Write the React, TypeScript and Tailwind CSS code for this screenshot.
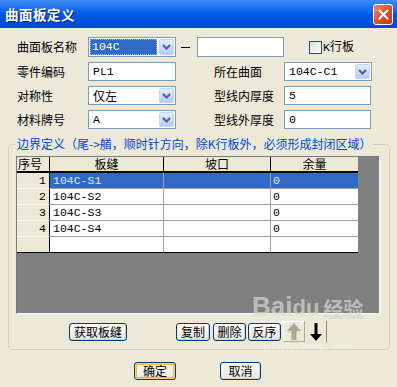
import React from 'react';

const cjk = "font-['Noto_Sans_CJK_SC','Noto_Sans',sans-serif]";
const mono = "font-['Liberation_Mono','DejaVu_Sans_Mono',monospace]";

function Chevron() {
  return (
    <svg width="9" height="6" viewBox="0 0 9 6">
      <path d="M1 1l3.5 3.5L8 1" fill="none" stroke="#4d6185" strokeWidth="2" />
    </svg>
  );
}

function Combo({ value, w, selected, latin }: { value: string; w: string; selected?: boolean; latin?: boolean }) {
  return (
    <div className={`flex h-full items-stretch border border-[#7f9db9] bg-white ${w}`}>
      <div className="flex flex-1 items-center p-[1px]">
        {selected ? (
          <span className="flex h-full w-full items-center border border-dotted border-[#8fb0f0] bg-[#316ac5] px-[1px] text-[11.5px] text-white">
            <span className={mono}>{value}</span>
          </span>
        ) : (
          <span className={`px-[3px] ${latin ? `${mono} text-[11.5px]` : `${cjk} text-[12px]`}`}>{value}</span>
        )}
      </div>
      <div className="m-[1px] flex w-[15px] items-center justify-center rounded-[2px] border border-[#c3d3fd] bg-gradient-to-b from-[#e4ecfd] to-[#b6cbf8]">
        <Chevron />
      </div>
    </div>
  );
}

function Field({ value, w }: { value: string; w: string }) {
  return (
    <div className={`flex h-full items-center border border-[#7f9db9] bg-white px-[4px] text-[11.5px] ${mono} ${w}`}>
      {value}
    </div>
  );
}

function Btn({ label, w, primary }: { label: string; w: string; primary?: boolean }) {
  return (
    <button
      className={`flex h-[18px] items-center justify-center rounded-[3px] border border-[#003c74] bg-gradient-to-b from-white to-[#e6e5dd] text-[12px] leading-none text-black ${cjk} ${w} ${
        primary ? 'shadow-[inset_0_0_0_1px_#fbd77a,inset_0_0_0_2px_#f4b23a]' : 'shadow-[inset_-1px_-1px_0_#d6d0c5]'
      }`}
    >
      {label}
    </button>
  );
}

const rows = [
  { n: 1, seam: '104C-S1', bevel: '', margin: '0' },
  { n: 2, seam: '104C-S2', bevel: '', margin: '0' },
  { n: 3, seam: '104C-S3', bevel: '', margin: '0' },
  { n: 4, seam: '104C-S4', bevel: '', margin: '0' },
];

function Grid() {
  return (
    <div className="flex h-[158px] w-[364px] flex-col border border-[#7a7a7a] border-b-white border-r-white bg-[#808080]">
      {/* header */}
      <div className={`flex h-[16px] text-[12px] leading-[14px] ${cjk}`}>
        <div className="w-[33px] border-r border-b-2 border-black bg-[#ece9d8] pl-[1px]">序号</div>
        <div className="w-[114px] border-r border-b-2 border-black bg-[#ece9d8] text-center">板缝</div>
        <div className="w-[107px] border-r border-b-2 border-black bg-[#ece9d8] text-center">坡口</div>
        <div className="w-[87px] border-b-2 border-black bg-[#ece9d8] text-center">余量</div>
      </div>
      {rows.map((r, i) => {
        const sel = i === 0;
        const cell = sel ? 'bg-[#316ac5] text-[#d6ecff]' : 'bg-white text-black';
        return (
          <div key={r.n} className={`flex h-[16px] text-[11.5px] leading-[15px] ${mono}`}>
            <div className="w-[33px] border-r border-b border-r-black border-b-[#f8f8f4] bg-[#ece9d8] pr-[3px] text-right">{r.n}</div>
            <div className={`w-[114px] border-r border-b border-[#a0a0a0] pl-[3px] ${cell}`}>{r.seam}</div>
            <div className={`w-[107px] border-r border-b border-[#a0a0a0] ${cell}`}>{r.bevel}</div>
            <div className={`w-[87px] border-b border-[#a0a0a0] pl-[2px] ${cell}`}>{r.margin}</div>
          </div>
        );
      })}
      <div className="flex h-[16px]">
        <div className="w-[33px] border-r border-b border-black bg-[#ece9d8]" />
        <div className="w-[114px] border-r border-b border-[#a0a0a0] border-b-black bg-white" />
        <div className="w-[107px] border-r border-b border-[#a0a0a0] border-b-black bg-white" />
        <div className="w-[87px] border-b border-black bg-white" />
      </div>
    </div>
  );
}

export default function App() {
  return (
    <div className={`relative flex h-[387px] w-[397px] flex-col overflow-hidden bg-[#ece9d8] ${cjk}`}>
      {/* title bar */}
      <div className="flex h-[28px] items-center justify-between bg-gradient-to-b from-[#3d8cf7] via-[#0058e6] to-[#0249d6] pl-[5px] pr-[4px]">
        <span className="text-[13.5px] font-bold tracking-[0.5px] text-white [text-shadow:1px_1px_0_#0a246a]">曲面板定义</span>
        <div className="flex h-[21px] w-[20px] items-center justify-center rounded-[3px] border border-white bg-gradient-to-br from-[#f08a66] via-[#de512c] to-[#c2381a]">
          <svg width="11" height="11" viewBox="0 0 11 11">
            <path d="M1.5 1.5l8 8M9.5 1.5l-8 8" stroke="white" strokeWidth="2" strokeLinecap="square" />
          </svg>
        </div>
      </div>

      {/* form */}
      <div className="flex flex-col gap-[5px] pt-[9px] pl-[17px] text-[12px]">
        <div className="flex h-[20px] items-center">
          <span className="w-[71px]">曲面板名称</span>
          <Combo value="104C" w="w-[88px]" selected />
          <span className="ml-[5px] h-[1px] w-[9px] bg-black" />
          <Field value="" w="ml-[7px] w-[87px]" />
          <span className="ml-[25px] h-[13px] w-[13px] border border-[#1c5180] bg-gradient-to-br from-[#dcdcd6] to-white" />
          <span className="ml-[1px]">
            <span className={`${mono} text-[11.5px]`}>K</span>行板
          </span>
        </div>
        <div className="flex h-[19px] items-center">
          <span className="w-[71px]">零件编码</span>
          <Field value="PL1" w="w-[88px]" />
          <span className="ml-[38px] w-[70px]">所在曲面</span>
          <Combo value="104C-C1" w="w-[88px]" latin />
        </div>
        <div className="flex h-[19px] items-center">
          <span className="w-[71px]">对称性</span>
          <Combo value="仅左" w="w-[88px]" />
          <span className="ml-[38px] w-[70px]">型线内厚度</span>
          <Field value="5" w="w-[87px]" />
        </div>
        <div className="flex h-[19px] items-center">
          <span className="w-[71px]">材料牌号</span>
          <Combo value="A" w="w-[88px]" latin />
          <span className="ml-[38px] w-[70px]">型线外厚度</span>
          <Field value="0" w="w-[87px]" />
        </div>
      </div>

      {/* group box */}
      <fieldset className="mt-[7px] ml-[8px] w-[382px] rounded-[4px] border border-[#d0d0bf] pb-[7px] pl-[7px]">
        <legend className="px-[1px] text-[12px] leading-[16px] text-[#0046d5]">
          边界定义（尾-&gt;艏，顺时针方向，除K行板外，必须形成封闭区域）
        </legend>
        <div className="mt-[4px]">
          <Grid />
        </div>
        <div className="mt-[7px] flex items-center">
          <Btn label="获取板缝" w="ml-[53px] w-[58px]" />
          <Btn label="复制" w="ml-[49px] w-[34px]" />
          <Btn label="删除" w="ml-[3px] w-[33px]" />
          <Btn label="反序" w="ml-[2px] w-[33px]" />
          <div className="ml-[2px] flex h-[21px] w-[22px] items-center justify-center border border-white border-b-[#aca899] border-r-[#aca899]">
            <svg width="14" height="17" viewBox="0 0 14 17">
              <path d="M7 0L14 8H9.5V17H4.5V8H0Z" fill="#a9a797" />
            </svg>
          </div>
          <div className="flex h-[21px] w-[22px] items-center justify-center border-r border-[#8a887a]">
            <svg width="14" height="18" viewBox="0 0 14 18">
              <path d="M5.5 0H8.5V11H13L7 18L1 11H5.5Z" fill="#000" />
            </svg>
          </div>
        </div>
      </fieldset>

      {/* dialog buttons */}
      <div className="mt-[12px] flex">
        <Btn label="确定" w="ml-[134px] w-[42px]" primary />
        <Btn label="取消" w="ml-[44px] w-[41px]" />
      </div>

      {/* watermark */}
      <div className="pointer-events-none absolute top-[293px] left-[252px] flex flex-col items-center text-white/45">
        <div className="flex items-end font-['Liberation_Sans',sans-serif] text-[26px] font-bold leading-none [text-shadow:0_0_1px_rgba(150,150,140,0.5)]">
          <span>Bai</span>
          <span className="text-[22px]">du</span>
          <span className={`ml-[4px] text-[20px] ${cjk}`}>经验</span>
        </div>
        <span className="mt-[20px] font-['Liberation_Sans',sans-serif] text-[11px] text-white/40">jingyan.baidu.com</span>
      </div>
    </div>
  );
}
